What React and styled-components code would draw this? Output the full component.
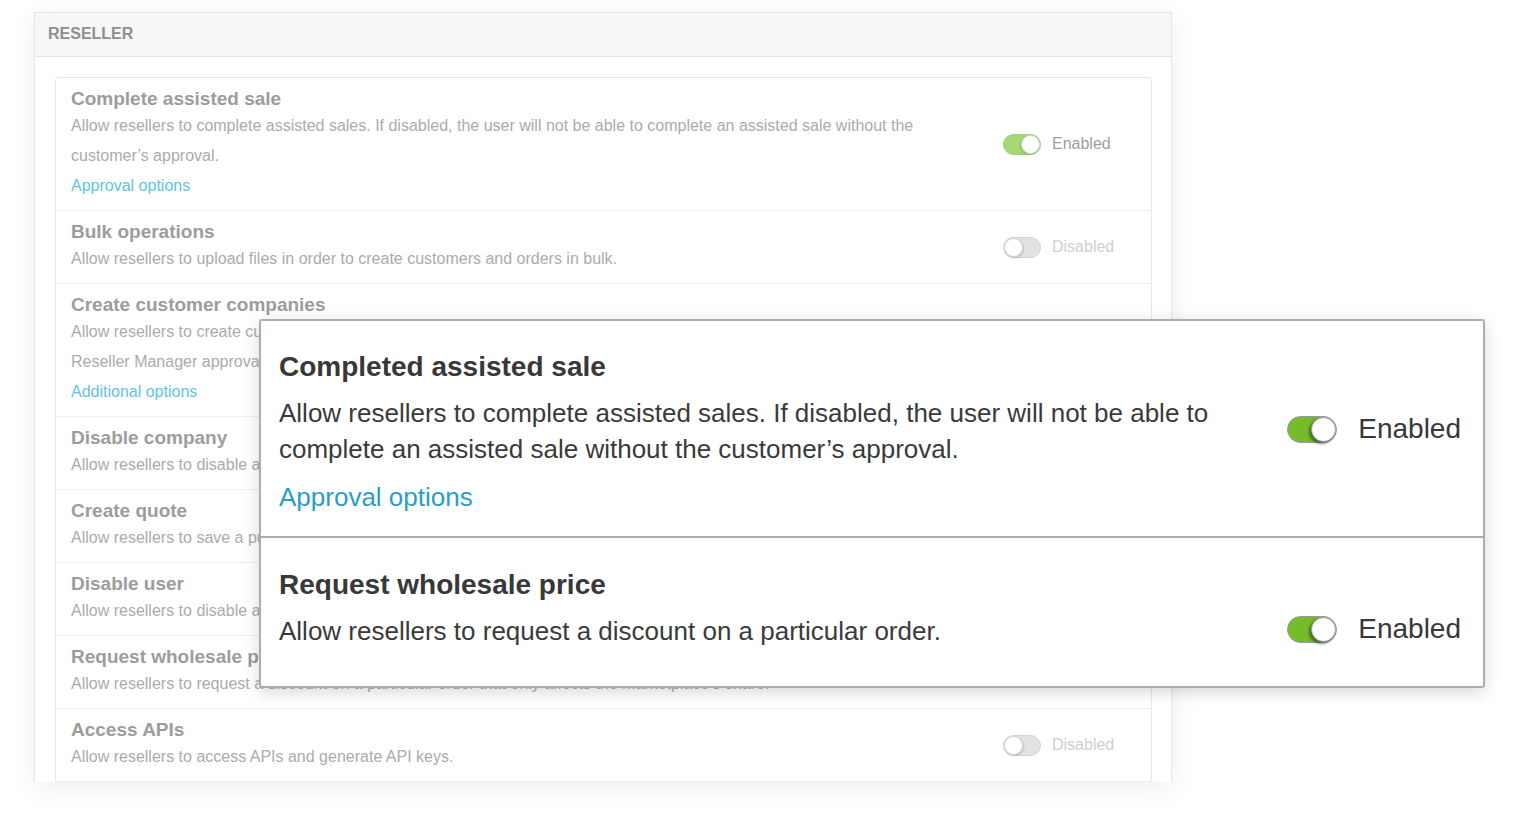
import React from 'react';
import styled, { createGlobalStyle, css } from 'styled-components';

const GlobalStyle = createGlobalStyle`
	html, body {
		margin: 0;
		padding: 0;
		background: #ffffff;
		font-family: 'Liberation Sans', Arial, Helvetica, sans-serif;
	}
`;

const backgroundRows = [
	{
		title: 'Complete assisted sale',
		lines: [
			'Allow resellers to complete assisted sales. If disabled, the user will not be able to complete an assisted sale without the customer\u2019s approval.',
		],
		link: 'Approval options',
		on: true,
	},
	{
		title: 'Bulk operations',
		lines: ['Allow resellers to upload files in order to create customers and orders in bulk.'],
		on: false,
	},
	{
		title: 'Create customer companies',
		lines: [
			'Allow resellers to create customer companies on behalf of their customers. If disabled, new companies will require',
			'Reseller Manager approval.',
		],
		link: 'Additional options',
		on: true,
	},
	{
		title: 'Disable company',
		lines: ['Allow resellers to disable a customer company and all of its users.'],
		on: true,
	},
	{
		title: 'Create quote',
		lines: ['Allow resellers to save a purchase as a quote for the customer to review.'],
		on: true,
	},
	{
		title: 'Disable user',
		lines: ['Allow resellers to disable a user of a customer company.'],
		on: true,
	},
	{
		title: 'Request wholesale price',
		lines: ['Allow resellers to request a discount on a particular order that only affects the marketplace\u2019s share.'],
		on: true,
	},
	{
		title: 'Access APIs',
		lines: ['Allow resellers to access APIs and generate API keys.'],
		on: false,
	},
];

const Toggle = ({ on, big }) => (
	<Track on={on} big={big}>
		<Knob on={on} big={big} />
	</Track>
);

const App = () => {
	return (
		<>
			<GlobalStyle />
			<Stage>
				<Panel>
					<PanelHeader>Reseller</PanelHeader>
					<PanelBody>
						<Card>
							{backgroundRows.map((row) => (
								<Row key={row.title}>
									<RowText>
										<RowTitle>{row.title}</RowTitle>
										{row.lines.map((line) => (
											<RowDesc key={line}>{line}</RowDesc>
										))}
										{row.link && <RowLink>{row.link}</RowLink>}
									</RowText>
									<Status>
										<Toggle on={row.on} />
										<StatusLabel on={row.on}>{row.on ? 'Enabled' : 'Disabled'}</StatusLabel>
									</Status>
								</Row>
							))}
						</Card>
					</PanelBody>
				</Panel>

				<Callout>
					<CalloutSection>
						<CalloutText>
							<CalloutTitle>Completed assisted sale</CalloutTitle>
							<CalloutDesc>
								Allow resellers to complete assisted sales. If disabled, the user will not be able to
								complete an assisted sale without the customer’s approval.
							</CalloutDesc>
							<CalloutLink>Approval options</CalloutLink>
						</CalloutText>
						<CalloutStatus offset={64}>
							<Toggle on big />
							<CalloutLabel>Enabled</CalloutLabel>
						</CalloutStatus>
					</CalloutSection>
					<CalloutSection last>
						<CalloutText>
							<CalloutTitle>Request wholesale price</CalloutTitle>
							<CalloutDesc>Allow resellers to request a discount on a particular order.</CalloutDesc>
						</CalloutText>
						<CalloutStatus offset={46}>
							<Toggle on big />
							<CalloutLabel>Enabled</CalloutLabel>
						</CalloutStatus>
					</CalloutSection>
				</Callout>
			</Stage>
		</>
	);
};

const Stage = styled.div`
	position: relative;
	width: 1520px;
	height: 830px;
	padding: 12px 0 0 34px;
	box-sizing: border-box;
	overflow: hidden;
`;

const Panel = styled.div`
	width: 1138px;
	height: 770px;
	box-sizing: border-box;
	border: 1px solid #e6e6e6;
	border-bottom: none;
	background: #ffffff;
	box-shadow: 0 6px 28px rgba(0, 0, 0, 0.07);
	overflow: hidden;
	display: flex;
	flex-direction: column;
`;

const PanelHeader = styled.div`
	height: 44px;
	flex-shrink: 0;
	display: flex;
	align-items: center;
	padding: 0 13px 2px;
	box-sizing: border-box;
	background: #f7f7f7;
	border-bottom: 1px solid #e3e3e3;
	color: #8e8e8e;
	font-size: 16px;
	font-weight: 700;
	text-transform: uppercase;
`;

const PanelBody = styled.div`
	padding: 20px 19px 0 20px;
`;

const Card = styled.div`
	border: 1px solid #e8e8e8;
	border-radius: 3px;
`;

const Row = styled.div`
	display: grid;
	grid-template-columns: 1fr 132px;
	column-gap: 32px;
	align-items: center;
	padding: 9px 16px 9px 15px;
	border-bottom: 1px solid #efefef;
`;

const RowText = styled.div`
	min-width: 0;
`;

const RowTitle = styled.div`
	height: 24px;
	line-height: 24px;
	font-size: 19px;
	font-weight: 700;
	color: #9c9c9c;
	white-space: nowrap;
`;

const RowDesc = styled.div`
	font-size: 16px;
	line-height: 30px;
	color: #ababab;
	max-width: 890px;
`;

const RowLink = styled.div`
	font-size: 16px;
	line-height: 30px;
	color: #62c3e2;
`;

const Status = styled.div`
	display: flex;
	align-items: center;
	gap: 11px;
`;

const StatusLabel = styled.span`
	font-size: 16px;
	color: ${(props) => (props.on ? '#9e9e9e' : '#cfcfcf')};
`;

const Track = styled.span`
	position: relative;
	display: inline-block;
	flex-shrink: 0;
	box-sizing: border-box;
	width: 38px;
	height: 21px;
	border-radius: 11px;
	background: ${(props) => (props.on ? '#a6d777' : '#e2e2e2')};
	border: 1px solid ${(props) => (props.on ? '#a0cf74' : '#d2d2d2')};
	${(props) =>
		props.big &&
		css`
			width: 50px;
			height: 27px;
			border-radius: 14px;
			background: #76bc2a;
			border: 1px solid #9a9a9a;
		`}
`;

const Knob = styled.span`
	position: absolute;
	top: 0;
	left: ${(props) => (props.on ? 'auto' : '0')};
	right: ${(props) => (props.on ? '0' : 'auto')};
	box-sizing: border-box;
	width: 19px;
	height: 19px;
	border-radius: 50%;
	background: #ffffff;
	border: 1px solid #d6d6d6;
	box-shadow: ${(props) => (props.on ? '-1px 1px 2px rgba(0, 0, 0, 0.15)' : '1px 1px 2px rgba(0, 0, 0, 0.15)')};
	${(props) =>
		props.big &&
		css`
			width: 25px;
			height: 25px;
			border: 1px solid #a0a0a0;
			box-shadow: -2px 2px 3px rgba(0, 0, 0, 0.45);
		`}
`;

const Callout = styled.div`
	position: absolute;
	left: 259px;
	top: 319px;
	width: 1226px;
	box-sizing: border-box;
	background: #ffffff;
	border: 2px solid #adadad;
	border-radius: 3px;
	box-shadow: 0 4px 16px rgba(0, 0, 0, 0.16);
`;

const CalloutSection = styled.div`
	display: flex;
	align-items: flex-start;
	padding: ${(props) => (props.last ? '29px 22px 23px 18px' : '28px 22px 21px 18px')};
	border-bottom: ${(props) => (props.last ? 'none' : '2px solid #adadad')};
`;

const CalloutText = styled.div`
	width: 990px;
	flex-shrink: 0;
`;

const CalloutTitle = styled.div`
	font-size: 28px;
	line-height: 36px;
	font-weight: 700;
	color: #383838;
	margin-bottom: 10px;
`;

const CalloutDesc = styled.div`
	font-size: 26px;
	line-height: 36px;
	color: #3a3a3a;
	width: 960px;
	margin-bottom: 14px;
`;

const CalloutLink = styled.div`
	font-size: 26px;
	line-height: 36px;
	color: #2a9ccb;
	margin-top: -2px;
`;

const CalloutStatus = styled.div`
	display: flex;
	align-items: center;
	gap: 21px;
	margin-left: auto;
	margin-top: ${(props) => props.offset}px;
`;

const CalloutLabel = styled.span`
	font-size: 28px;
	line-height: 32px;
	color: #383838;
`;

export default App;
